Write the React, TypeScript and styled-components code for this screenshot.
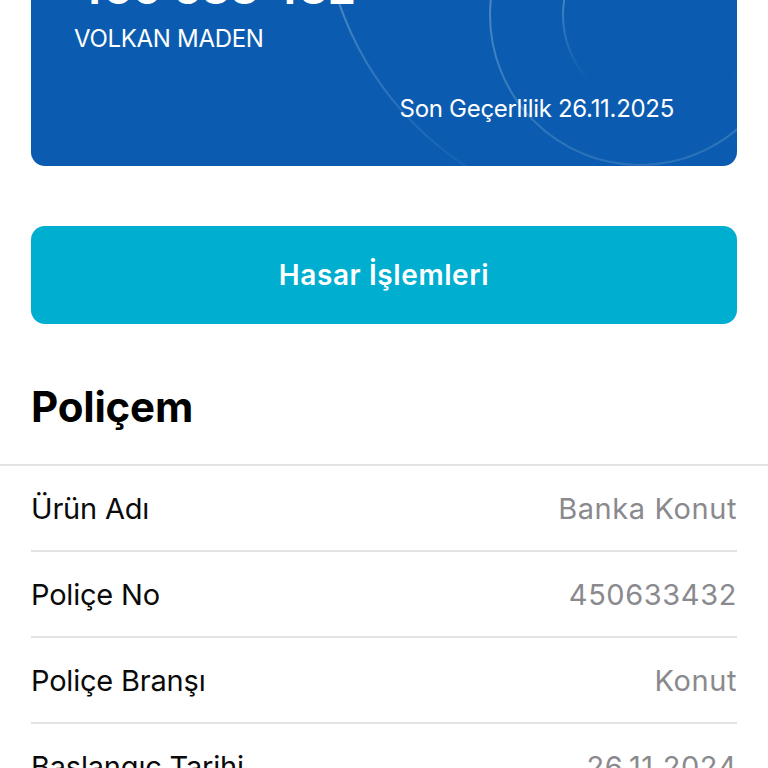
import styled, { createGlobalStyle } from 'styled-components';

const GlobalStyle = createGlobalStyle`
  html, body {
    margin: 0;
    padding: 0;
    background: #ffffff;
    overflow: hidden;
  }

  body {
    font-family: Inter, "Noto Sans", "Liberation Sans", sans-serif;
    -webkit-font-smoothing: antialiased;
  }
`;

interface PolicyField {
  label: string;
  value: string;
}

const fields: PolicyField[] = [
  { label: 'Ürün Adı', value: 'Banka Konut' },
  { label: 'Poliçe No', value: '450633432' },
  { label: 'Poliçe Branşı', value: 'Konut' },
  { label: 'Başlangıç Tarihi', value: '26.11.2024' },
  { label: 'Bitiş Tarihi', value: '26.11.2025' },
];

// page is shown scrolled down, the card top is above the viewport
const Screen = styled.main`
  display: flex;
  flex-direction: column;
  margin-top: -76px;
  width: 768px;
`;

const Section = styled.div`
  padding: 0 31px;
  display: flex;
  flex-direction: column;
`;

const PolicyCard = styled.div`
  position: relative;
  overflow: hidden;
  display: flex;
  flex-direction: column;
  padding: 41px 63px 42px 43px;
  background: #0b5cb0;
  border-radius: 14px;
  color: #ffffff;
`;

const CardRings = styled.svg`
  position: absolute;
  inset: 0;
  width: 100%;
  height: 100%;
  pointer-events: none;
`;

const CardNumber = styled.div`
  position: relative;
  margin-top: -3px;
  font-size: 44px;
  line-height: 52px;
  font-weight: 700;
  letter-spacing: 0.2px;
`;

const Holder = styled.div`
  position: relative;
  margin-top: 10px;
  font-size: 24px;
  line-height: 30px;
  letter-spacing: -0.3px;
`;

const Expiry = styled.div`
  position: relative;
  align-self: flex-end;
  margin-top: 40px;
  font-size: 24px;
  line-height: 30px;
  letter-spacing: -0.3px;
`;

const ClaimButton = styled.button`
  margin-top: 60px;
  height: 98px;
  border: 0;
  border-radius: 14px;
  background: #00aed0;
  color: #ffffff;
  font-family: inherit;
  font-size: 28px;
  font-weight: 600;
  letter-spacing: 0.6px;
  cursor: pointer;
`;

const Title = styled.h1`
  margin: 58px 0 32px;
  font-size: 42px;
  line-height: 50px;
  font-weight: 700;
  color: #000000;
  letter-spacing: -0.2px;
`;

const Divider = styled.div`
  height: 2px;
  background: #e3e3e5;
`;

const FieldList = styled.div`
  display: flex;
  flex-direction: column;
  padding: 0 31px;
`;

const FieldRow = styled.div<{ $last?: boolean }>`
  display: flex;
  align-items: center;
  justify-content: space-between;
  height: 84px;
  border-bottom: ${(p) => (p.$last ? 'none' : '2px solid #e3e3e5')};
  font-size: 29px;
`;

const FieldLabel = styled.span`
  color: #0a0a0a;
  letter-spacing: -0.2px;
`;

const FieldValue = styled.span`
  color: #8a8a8e;
  letter-spacing: 0.6px;
`;

export default function App() {
  return (
    <>
      <GlobalStyle />
      <Screen>
        <Section>
          <PolicyCard>
            <CardRings viewBox="0 0 706 242" preserveAspectRatio="none">
              <defs>
                <linearGradient id="fadeOuter" gradientUnits="userSpaceOnUse" x1="0" y1="60" x2="0" y2="242">
                  <stop offset="0" stopColor="#ffffff" stopOpacity="0.28" />
                  <stop offset="1" stopColor="#ffffff" stopOpacity="0.04" />
                </linearGradient>
                <linearGradient id="fadeMiddle" gradientUnits="userSpaceOnUse" x1="0" y1="60" x2="0" y2="242">
                  <stop offset="0" stopColor="#ffffff" stopOpacity="0.28" />
                  <stop offset="1" stopColor="#ffffff" stopOpacity="0.12" />
                </linearGradient>
                <linearGradient id="fadeInner" gradientUnits="userSpaceOnUse" x1="0" y1="76" x2="0" y2="156">
                  <stop offset="0" stopColor="#ffffff" stopOpacity="0.24" />
                  <stop offset="1" stopColor="#ffffff" stopOpacity="0" />
                </linearGradient>
              </defs>
              <g fill="none" strokeWidth="2">
                <circle cx="609" cy="-24" r="318" stroke="url(#fadeOuter)" />
                <circle cx="609" cy="91" r="150" stroke="url(#fadeMiddle)" />
                <circle cx="629" cy="91" r="97" stroke="url(#fadeInner)" />
              </g>
            </CardRings>
            <CardNumber>450 633 432</CardNumber>
            <Holder>VOLKAN MADEN</Holder>
            <Expiry>Son Geçerlilik 26.11.2025</Expiry>
          </PolicyCard>
          <ClaimButton>Hasar İşlemleri</ClaimButton>
          <Title>Poliçem</Title>
        </Section>
        <Divider />
        <FieldList>
          {fields.map((f, i) => (
            <FieldRow key={f.label} $last={i === fields.length - 1}>
              <FieldLabel>{f.label}</FieldLabel>
              <FieldValue>{f.value}</FieldValue>
            </FieldRow>
          ))}
        </FieldList>
      </Screen>
    </>
  );
}
